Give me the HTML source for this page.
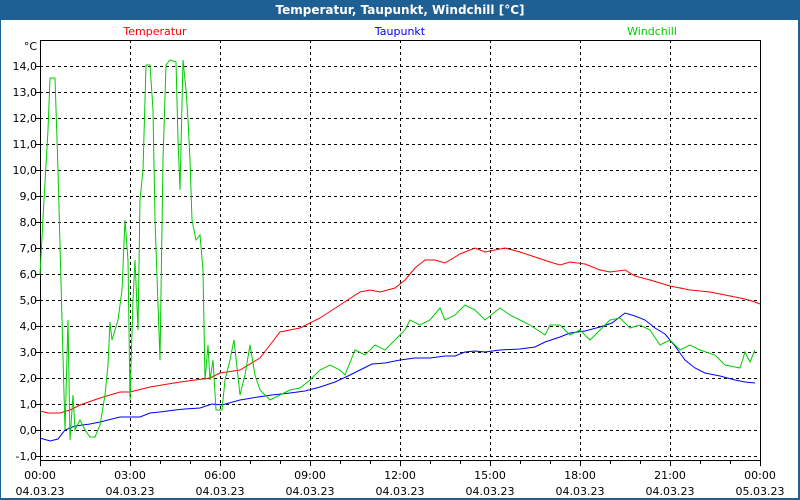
<!DOCTYPE html>
<html><head><meta charset="utf-8"><style>
html,body{margin:0;padding:0;width:800px;height:500px;overflow:hidden;background:#fff}
svg{display:block}
text{font-family:Tahoma,"DejaVu Sans","Liberation Sans",sans-serif;font-size:11px}
</style></head><body>
<svg width="800" height="500" viewBox="0 0 800 500">
<rect x="0" y="0" width="800" height="500" fill="#1e5f94"/>
<rect x="1" y="20" width="797" height="478" fill="#fff"/>
<text x="400" y="14" text-anchor="middle" fill="#fff" font-weight="bold" style="font-size:12px">Temperatur, Taupunkt, Windchill [°C]</text>
<text x="155" y="35" text-anchor="middle" fill="#ff0000">Temperatur</text>
<text x="400" y="35" text-anchor="middle" fill="#0000ff">Taupunkt</text>
<text x="652" y="35" text-anchor="middle" fill="#00cc00">Windchill</text>
<g stroke="#000" stroke-width="1" stroke-dasharray="3,3" shape-rendering="crispEdges">
<path d="M40 66.5H760M40 92.5H760M40 118.5H760M40 144.5H760M40 170.5H760M40 196.5H760M40 222.5H760M40 248.5H760M40 274.5H760M40 300.5H760M40 326.5H760M40 352.5H760M40 378.5H760M40 404.5H760M40 430.5H760M40 456.5H760"/>
<path d="M130.5 40V460M220.5 40V460M310.5 40V460M400.5 40V460M490.5 40V460M580.5 40V460M670.5 40V460"/>
</g>
<rect x="40.5" y="40.5" width="720" height="420" fill="none" stroke="#000" shape-rendering="crispEdges"/>
<g stroke="#000" shape-rendering="crispEdges">
<path d="M40.5 460V466M70.5 460V464M100.5 460V464M130.5 460V466M160.5 460V464M190.5 460V464M220.5 460V466M250.5 460V464M280.5 460V464M310.5 460V466M340.5 460V464M370.5 460V464M400.5 460V466M430.5 460V464M460.5 460V464M490.5 460V466M520.5 460V464M550.5 460V464M580.5 460V466M610.5 460V464M640.5 460V464M670.5 460V466M700.5 460V464M730.5 460V464M760.5 460V466M35 66.5H40M35 92.5H40M35 118.5H40M35 144.5H40M35 170.5H40M35 196.5H40M35 222.5H40M35 248.5H40M35 274.5H40M35 300.5H40M35 326.5H40M35 352.5H40M35 378.5H40M35 404.5H40M35 430.5H40M35 456.5H40"/>
</g>
<g text-anchor="end" fill="#000">
<text x="37" y="50">°C</text>
<text x="37" y="70">14,0</text><text x="37" y="96">13,0</text><text x="37" y="122">12,0</text><text x="37" y="148">11,0</text><text x="37" y="174">10,0</text><text x="37" y="200">9,0</text><text x="37" y="226">8,0</text><text x="37" y="252">7,0</text><text x="37" y="278">6,0</text><text x="37" y="304">5,0</text><text x="37" y="330">4,0</text><text x="37" y="356">3,0</text><text x="37" y="382">2,0</text><text x="37" y="408">1,0</text><text x="37" y="434">0,0</text><text x="37" y="460">-1,0</text>
</g>
<g text-anchor="middle" fill="#000">
<text x="40" y="479">00:00</text><text x="40" y="495">04.03.23</text>
<text x="130" y="479">03:00</text><text x="130" y="495">04.03.23</text>
<text x="220" y="479">06:00</text><text x="220" y="495">04.03.23</text>
<text x="310" y="479">09:00</text><text x="310" y="495">04.03.23</text>
<text x="400" y="479">12:00</text><text x="400" y="495">04.03.23</text>
<text x="490" y="479">15:00</text><text x="490" y="495">04.03.23</text>
<text x="580" y="479">18:00</text><text x="580" y="495">04.03.23</text>
<text x="670" y="479">21:00</text><text x="670" y="495">04.03.23</text>
<text x="760" y="479">00:00</text><text x="760" y="495">05.03.23</text>
</g>
<polyline fill="none" stroke="#ff0000" stroke-width="1" points="40,411 48,413 60,413 70,410 80,405 100,398 120,392 130,392 150,387 180,382 210,378 220,373 240,370 260,358 270,345 280,332 300,328 320,318 340,305 360,292 370,290 380,292 395,288 405,280 415,268 425,260 435,260 445,263 460,254 470,250 475,248 485,252 495,250 505,248 520,252 535,257 550,262 560,265 570,262 585,264 600,270 610,272 625,270 635,276 650,280 670,286 690,290 710,292 730,296 745,299 755,302 760,304"/>
<polyline fill="none" stroke="#0000ff" stroke-width="1" points="40,438 50,441 58,439 65,430 75,426 90,424 100,422 120,417 140,417 150,413 160,412 175,410 185,409 200,408 212,404 222,405 240,400 258,397 272,395 290,393 305,391 320,387 335,382 348,376 360,370 372,364 385,363 400,360 415,358 430,358 445,356 455,356 465,352 475,351 485,352 500,350 520,349 535,347 545,342 560,337 570,333 585,331 600,327 612,323 625,313 635,316 645,320 655,328 665,334 675,346 685,360 695,368 705,373 720,376 735,380 745,382 755,383"/>
<polyline fill="none" stroke="#00cc00" stroke-width="1" points="40,275 44,200 48,130 50,78 55,78 58,170 62,320 65,430 68,320 70,440 73,395 75,430 80,420 85,430 90,437 95,437 100,425 105,395 108,365 110,322 112,340 115,330 118,320 122,290 125,220 128,260 130,400 133,300 135,260 138,330 140,200 143,170 146,65 150,65 153,110 155,220 160,360 163,160 166,65 170,60 176,62 178,140 180,190 183,60 186,90 188,120 190,160 192,220 196,240 200,235 203,270 205,380 208,345 210,380 213,360 216,410 222,410 225,380 230,360 234,340 240,395 245,375 250,345 255,375 260,390 270,400 280,395 290,390 300,388 310,380 320,370 330,365 340,370 345,375 355,350 365,355 375,345 385,350 395,340 405,330 410,320 420,325 430,320 440,308 445,320 455,315 465,305 475,310 485,320 500,308 510,315 520,320 530,325 545,335 550,325 560,325 570,335 580,330 590,340 600,330 610,320 620,318 630,328 640,325 650,330 660,345 670,340 680,350 690,345 700,350 715,355 725,365 740,368 745,352 750,362 755,350"/>
</svg>
</body></html>
